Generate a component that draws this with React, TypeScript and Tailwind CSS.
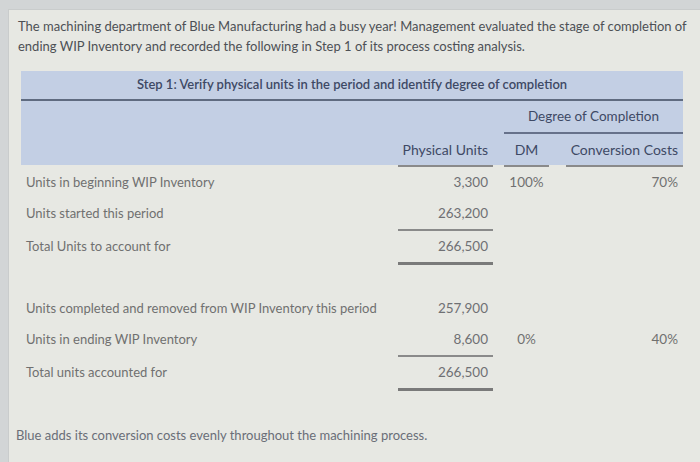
import React from 'react';

const rowsTop = [
  { label: 'Units in beginning WIP Inventory', units: '3,300', dm: '100%', cc: '70%' },
  { label: 'Units started this period', units: '263,200', dm: '', cc: '', line: 'thin' },
  { label: 'Total Units to account for', units: '266,500', dm: '', cc: '', line: 'thick' },
];

const rowsBottom = [
  { label: 'Units completed and removed from WIP Inventory this period', units: '257,900', dm: '', cc: '' },
  { label: 'Units in ending WIP Inventory', units: '8,600', dm: '0%', cc: '40%', line: 'thin' },
  { label: 'Total units accounted for', units: '266,500', dm: '', cc: '', line: 'thick' },
];

type Row = { label: string; units: string; dm: string; cc: string; line?: string };

const BodyRow = ({ row }: { row: Row }) => (
  <div className="flex">
    <div className="w-[377px] h-[31px] flex items-center pl-[5px] text-[#707070]">{row.label}</div>
    <div className="w-[95px] flex flex-col">
      <div className="h-[31px] flex items-center justify-end pr-[5px] text-[13.5px] text-[#6f7074]">{row.units}</div>
      {row.line === 'thin' && <div className="h-[2px] bg-[#8a8a8a]" />}
      {row.line === 'thick' && <div className="h-[3px] bg-[#7a7a7a]" />}
    </div>
    <div className="w-[11px]" />
    <div className="w-[45px] h-[31px] flex items-center justify-center text-[13.5px] text-[#707070]">{row.dm}</div>
    <div className="w-[17px]" />
    <div className="w-[117px] h-[31px] flex items-center justify-end pr-[5px] text-[13.5px] text-[#707070]">{row.cc}</div>
  </div>
);

export default function App() {
  return (
    <div className="w-[700px] h-[462px] bg-[#d2d5d6] pl-[8px] pt-[9px] overflow-hidden" style={{ fontFamily: 'Lato, "Open Sans", sans-serif' }}>
      <div className="h-full bg-[#e7e8e3] border-t border-l border-[#c9cccc] pl-[9px] pt-[6px] text-[13px]">
        <p className="text-[#4d5055] leading-[20px] w-[680px]">
          The machining department of Blue Manufacturing had a busy year! Management evaluated the stage of completion of ending WIP Inventory and recorded the following in Step 1 of its process costing analysis.
        </p>

        <div className="ml-[3px] mt-[15px] w-[662px]">
          <div className="bg-[#c3cfe4] text-[#3e4965]">
            <div className="h-[30px] flex items-center justify-center font-semibold border-b-2 border-[#5f6b80]">
              Step 1: Verify physical units in the period and identify degree of completion
            </div>
            <div className="flex h-[33px]">
              <div className="w-[483px]" />
              <div className="w-[179px] flex items-center justify-center text-[13.5px] border-b-2 border-[#66718a]">Degree of Completion</div>
            </div>
            <div className="flex h-[31px] items-center text-[14px]">
              <div className="w-[377px]" />
              <div className="w-[95px] text-right pr-[5px]">Physical Units</div>
              <div className="w-[11px]" />
              <div className="w-[45px] text-center">DM</div>
              <div className="w-[17px]" />
              <div className="w-[117px] text-right pr-[5px]">Conversion Costs</div>
            </div>
          </div>
          <div className="flex h-[2px]">
            <div className="w-[377px]" />
            <div className="w-[95px] bg-[#8a8a8a]" />
            <div className="w-[11px]" />
            <div className="w-[45px] bg-[#8a8a8a]" />
            <div className="w-[17px]" />
            <div className="w-[117px] bg-[#8a8a8a]" />
          </div>

          {rowsTop.map((r) => (
            <BodyRow key={r.label} row={r} />
          ))}
          <div className="h-[28px]" />
          {rowsBottom.map((r) => (
            <BodyRow key={r.label} row={r} />
          ))}
        </div>

        <p className="-ml-[2px] mt-[35px] text-[#6a6e78]">Blue adds its conversion costs evenly throughout the machining process.</p>
      </div>
    </div>
  );
}
